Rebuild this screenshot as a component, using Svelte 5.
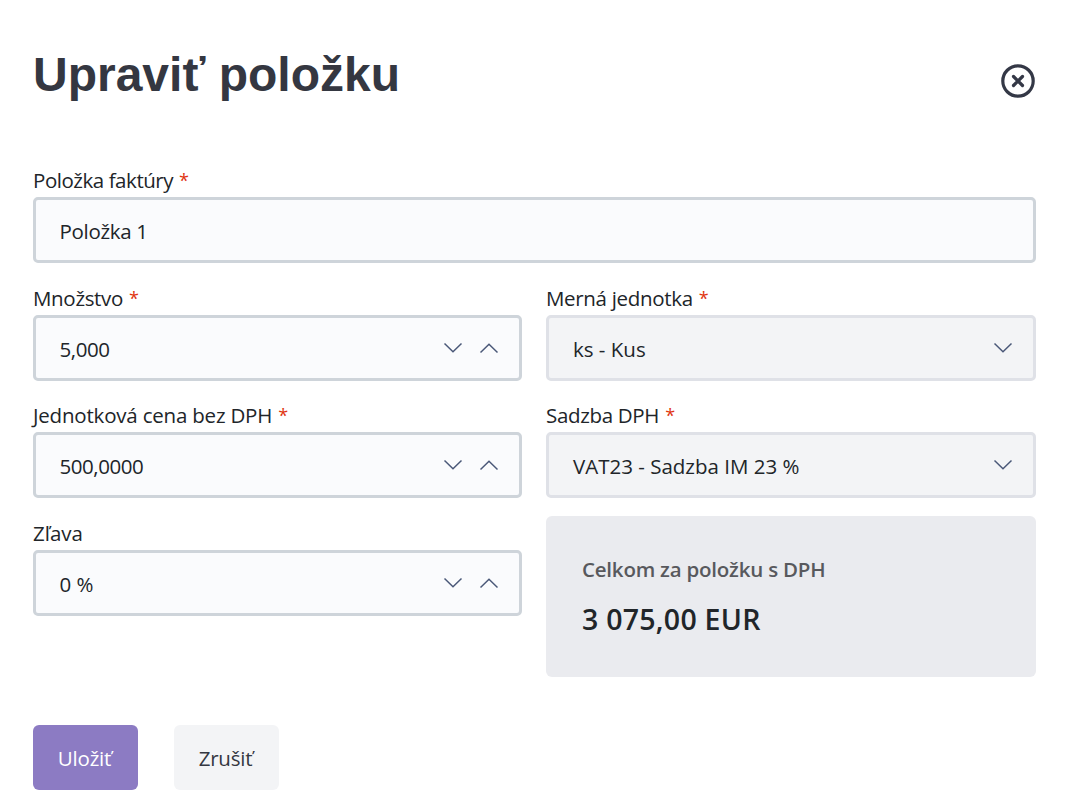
<script lang="ts">
  type Field = {
    id: string;
    label: string;
    required: boolean;
    value: string;
    kind: 'text' | 'number' | 'select';
  };

  const fields: Field[] = [
    { id: 'name', label: 'Položka faktúry', required: true, value: 'Položka 1', kind: 'text' },
    { id: 'quantity', label: 'Množstvo', required: true, value: '5,000', kind: 'number' },
    { id: 'unit', label: 'Merná jednotka', required: true, value: 'ks - Kus', kind: 'select' },
    { id: 'price', label: 'Jednotková cena bez DPH', required: true, value: '500,0000', kind: 'number' },
    { id: 'vat', label: 'Sadzba DPH', required: true, value: 'VAT23 - Sadzba IM 23 %', kind: 'select' },
    { id: 'discount', label: 'Zľava', required: false, value: '0 %', kind: 'number' },
  ];
</script>

{#snippet chevron(up: boolean)}
  <svg class="chevron" class:up width="20" height="12" viewBox="0 0 20 12" aria-hidden="true">
    <path d="M1.5 1.5 10 9.8l8.5-8.3" />
  </svg>
{/snippet}

<main class="dialog">
  <header class="dialog-head">
    <h1>Upraviť položku</h1>
    <button class="close" type="button" aria-label="Zavrieť">
      <svg width="34" height="34" viewBox="0 0 34 34">
        <circle cx="17" cy="17" r="15.2" />
        <path d="m12.5 12.5 9 9m0-9-9 9" />
      </svg>
    </button>
  </header>

  <form class="fields">
    {#each fields as field (field.id)}
      <div class="field {field.id}">
        <span class="label">
          <span class="label-text">{field.label}</span>
          {#if field.required}<span class="required">*</span>{/if}
        </span>
        <div class="control {field.kind}">
          <span class="value">{field.value}</span>
          {#if field.kind === 'number'}
            <span class="steps">
              {@render chevron(false)}
              {@render chevron(true)}
            </span>
          {:else if field.kind === 'select'}
            {@render chevron(false)}
          {/if}
        </div>
      </div>
    {/each}

    <div class="total">
      <span class="total-label">Celkom za položku s DPH</span>
      <strong class="total-value">3 075,00 EUR</strong>
    </div>
  </form>

  <footer class="actions">
    <button class="btn primary" type="button">Uložiť</button>
    <button class="btn" type="button">Zrušiť</button>
  </footer>
</main>

<style>
  :global(body) {
    background: #fff;
  }

  .dialog {
    box-sizing: border-box;
    width: 1078px;
    height: 810px;
    padding: 44px 42px 0 33px;
    overflow: hidden;
    font-family: 'Open Sans', 'Noto Sans', sans-serif;
    font-size: 20.5px;
    color: #212529;
  }

  .dialog-head {
    display: flex;
    justify-content: space-between;
    align-items: flex-start;
    height: 121px;
  }

  h1 {
    margin: 0;
    font-family: 'Liberation Sans', Arial, sans-serif;
    font-size: 48px;
    line-height: 62px;
    font-weight: 700;
    color: #343741;
    white-space: nowrap;
  }

  .close {
    display: flex;
    margin: 20px 1px 0 0;
    padding: 0;
    border: 0;
    background: none;
  }

  .close svg {
    fill: none;
    stroke: #343846;
    stroke-width: 3.2;
    stroke-linecap: round;
  }

  .fields {
    display: grid;
    grid-template-columns: 489px 490px;
    column-gap: 24px;
    row-gap: 19.6px;
  }

  .field {
    display: flex;
    flex-direction: column;
    height: 98px;
  }

  .field.name {
    grid-column: 1 / -1;
  }

  .label {
    display: flex;
    gap: 6px;
    height: 32px;
    line-height: 31px;
    letter-spacing: -0.32px;
    white-space: nowrap;
  }

  .name .label {
    letter-spacing: -0.45px;
  }

  .price .label {
    letter-spacing: -0.2px;
  }

  .discount .label {
    letter-spacing: 0;
  }

  .required {
    font-size: 18px;
    line-height: 31px;
    color: #e03410;
  }

  .control {
    box-sizing: border-box;
    display: flex;
    align-items: center;
    justify-content: space-between;
    height: 66px;
    padding: 2px 20px 0 23.5px;
    border: 3px solid #ced4da;
    border-radius: 5px;
    background: #fafbfd;
  }

  .control.text {
    letter-spacing: -0.3px;
  }

  .control.number {
    letter-spacing: -0.45px;
  }

  .discount .control {
    letter-spacing: 0;
  }

  .control.select {
    padding-right: 20.5px;
    padding-left: 24px;
    border-color: #dfe1e7;
    background: #f3f4f6;
  }

  .steps {
    display: flex;
    gap: 16px;
  }

  .chevron {
    display: block;
    margin-bottom: 1.6px;
    fill: none;
    stroke: #4a5878;
    stroke-width: 1.5;
  }

  .chevron.up {
    transform: rotate(180deg);
  }

  .total {
    box-sizing: border-box;
    display: flex;
    flex-direction: column;
    height: 161px;
    margin: -1.8px 0 -61.2px;
    padding: 38px 36px 0;
    border-radius: 6px;
    background: #eaebef;
  }

  .total-label {
    font-weight: 600;
    line-height: 30px;
    letter-spacing: -0.22px;
    color: #58595d;
  }

  .total-value {
    margin-top: 14px;
    font-size: 28.5px;
    font-weight: 600;
    line-height: 42px;
    letter-spacing: 0.25px;
  }

  .actions {
    display: flex;
    gap: 36px;
    margin-top: 109.2px;
  }

  .btn {
    width: 105px;
    height: 65px;
    padding: 2px 2px 0 0;
    border: 0;
    border-radius: 6px;
    background: #f3f4f6;
    font: inherit;
    letter-spacing: -0.2px;
    color: #343741;
  }

  .btn.primary {
    background: #8c7bc3;
    color: #fff;
  }
</style>
